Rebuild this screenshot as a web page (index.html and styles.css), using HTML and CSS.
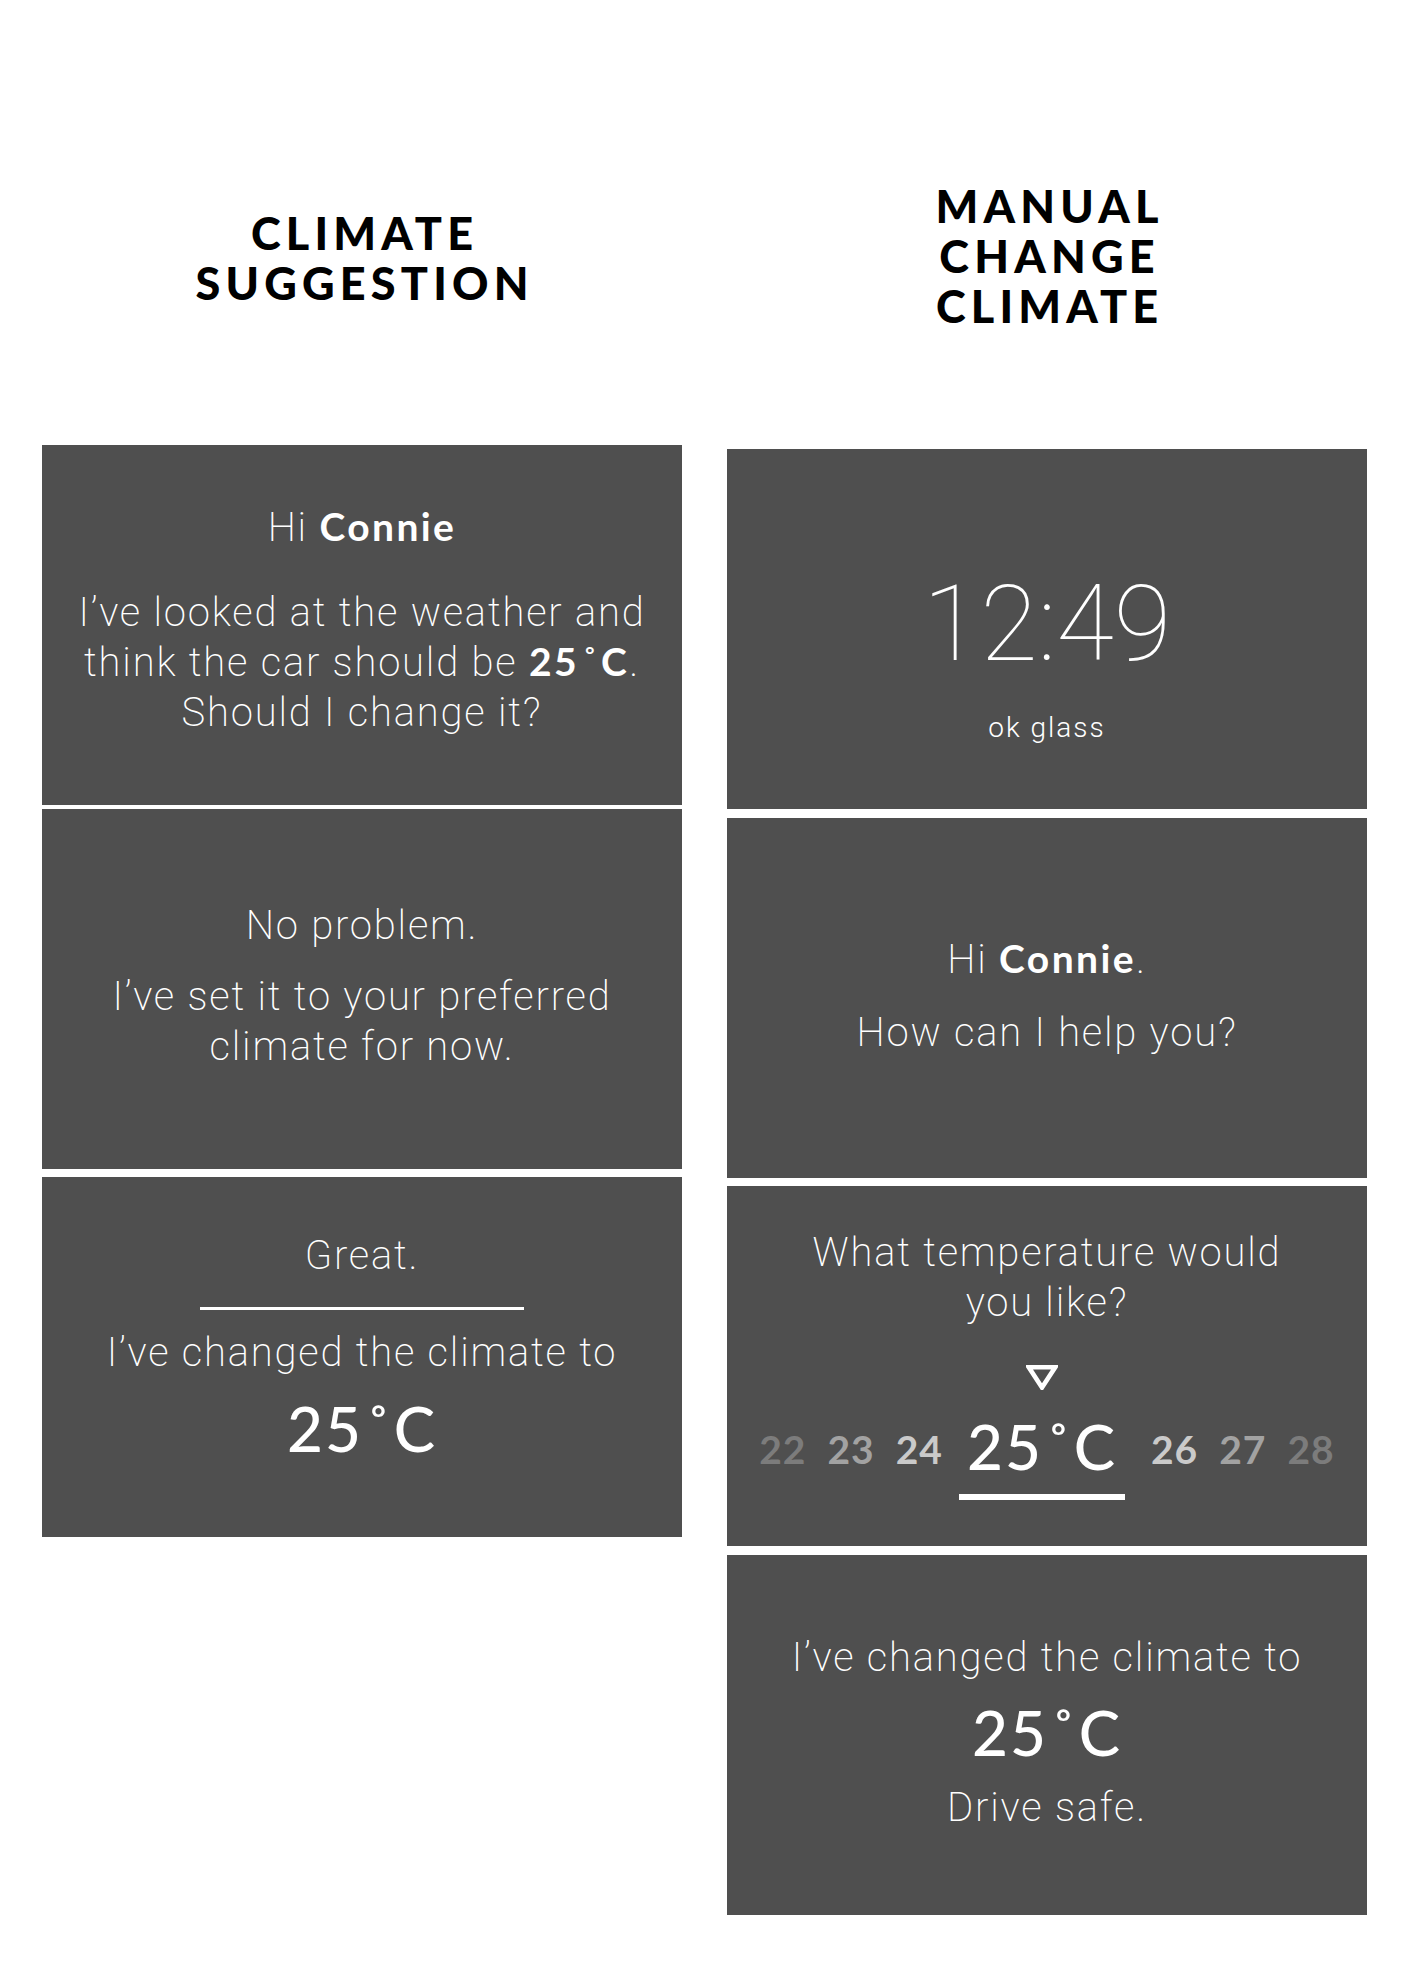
FILE: index.html
```html
<!DOCTYPE html>
<html lang="en">
<head>
<meta charset="utf-8">
<title>Climate flows</title>
<link rel="stylesheet" href="styles.css">
</head>
<body>
<main class="page">
  <section class="col">
    <header class="col-head">
      <h1 class="title">CLIMATE<br>SUGGESTION</h1>
    </header>
    <div class="card card--l1">
      <p class="line">Hi <span class="name">Connie</span></p>
      <p class="line gap-35">I’ve looked at the weather and<br>think the car should be <span class="name">25<span class="deg">˚</span>C</span>.<br>Should I change it?</p>
    </div>
    <div class="card card--l2 card--tight">
      <p class="line">No problem.</p>
      <p class="line gap-21">I’ve set it to your preferred<br>climate for now.</p>
    </div>
    <div class="card card--l3">
      <p class="line">Great.</p>
      <div class="rule"></div>
      <p class="line gap-18">I’ve changed the climate to</p>
      <p class="big-temp gap-19">25<span class="deg">˚</span>C</p>
    </div>
  </section>

  <section class="col">
    <header class="col-head col-head--right">
      <h1 class="title">MANUAL<br>CHANGE<br>CLIMATE</h1>
    </header>
    <div class="card card--r1">
      <p class="clock">12:49</p>
      <p class="sub">ok glass</p>
    </div>
    <div class="card card--r2 card--loose">
      <p class="line">Hi <span class="name">Connie</span>.</p>
      <p class="line gap-23">How can I help you?</p>
    </div>
    <div class="card card--r3">
      <p class="line">What temperature would<br>you like?</p>
      <svg class="pointer" width="32" height="25" viewBox="0 0 32 25" aria-hidden="true">
        <polygon points="2.8,2.3 29.2,2.3 16,22.5" fill="none" stroke="#fff" stroke-width="4.6" stroke-linejoin="miter"/>
      </svg>
      <div class="temps">
        <span class="t t--far">22</span>
        <span class="t t--mid">23</span>
        <span class="t t--near">24</span>
        <span class="t-current"><span class="t-current__value">25<span class="deg">˚</span>C</span></span>
        <span class="t t--near">26</span>
        <span class="t t--mid">27</span>
        <span class="t t--far">28</span>
      </div>
    </div>
    <div class="card card--r4 card--loose">
      <p class="line">I’ve changed the climate to</p>
      <p class="big-temp gap-18">25<span class="deg">˚</span>C</p>
      <p class="line gap-20">Drive safe.</p>
    </div>
  </section>
</main>
</body>
</html>
```

FILE: styles.css
```css
* { box-sizing: border-box; }

html, body {
  margin: 0;
  padding: 0;
  background: #ffffff;
}

body {
  width: 1410px;
  min-height: 1984px;
  font-family: Roboto, "Liberation Sans", sans-serif;
}

p, h1 { margin: 0; }

.page {
  display: flex;
  gap: 45px;
  padding: 70px 0 0 42px;
}

.col {
  width: 640px;
  display: flex;
  flex-direction: column;
}

.col-head {
  height: 375px;
  display: flex;
  align-items: center;
  justify-content: center;
}

.col-head--right {
  height: 379px;
  padding-bottom: 8px;
}

.title {
  font-family: Lato, "Liberation Sans", sans-serif;
  font-weight: 900;
  font-size: 45px;
  line-height: 50px;
  letter-spacing: 5.2px;
  padding-left: 5.2px;
  color: #000;
  text-align: center;
}

.card {
  height: 360px;
  background: #4f4f4f;
  color: #ffffff;
  display: flex;
  flex-direction: column;
  align-items: center;
  text-align: center;
  margin-top: 8px;
}

.card > * { flex-shrink: 0; }

.col-head + .card { margin-top: 0; }
.card--tight { margin-top: 4px; }
.card--loose { margin-top: 9px; }

.card--l1 { padding-top: 58px; }
.card--l2 { padding-top: 92px; }
.card--l3 { padding-top: 54px; }
.card--r1 { padding-top: 123px; }
.card--r2 { padding-top: 117px; }
.card--r3 { padding-top: 42px; }
.card--r4 { padding-top: 78px; }

.line {
  font-family: Roboto, "Liberation Sans", sans-serif;
  font-weight: 200;
  font-size: 40px;
  line-height: 50px;
  letter-spacing: 1.8px;
}

.name {
  font-family: Lato, "Liberation Sans", sans-serif;
  font-weight: 700;
  font-size: 39px;
  line-height: 1;
  letter-spacing: 2.4px;
}

.deg {
  display: inline-block;
  margin: 0 1px 0 3px;
  font-weight: 400;
}

.gap-18 { margin-top: 18px; }
.gap-19 { margin-top: 19px; }
.gap-20 { margin-top: 20px; }
.gap-21 { margin-top: 21px; }
.gap-23 { margin-top: 23px; }
.gap-35 { margin-top: 35px; }

.rule {
  width: 324px;
  height: 3px;
  background: #ffffff;
  margin-top: 26px;
}

.rule + .line { margin-top: 18px; }

.big-temp {
  font-family: Lato, "Liberation Sans", sans-serif;
  font-weight: 500;
  font-size: 62px;
  line-height: 62px;
  letter-spacing: 2px;
}

.clock {
  font-family: Roboto, "Liberation Sans", sans-serif;
  font-weight: 100;
  font-size: 105px;
  line-height: 105px;
}

.sub {
  font-family: Roboto, "Liberation Sans", sans-serif;
  font-weight: 300;
  font-size: 28px;
  line-height: 36px;
  letter-spacing: 2px;
  margin-top: 33px;
}

.pointer {
  display: block;
  margin-top: 37px;
  margin-left: -10px;
}

.temps {
  display: flex;
  align-items: flex-start;
  gap: 21px;
  margin-top: 25px;
}

.t {
  font-family: Lato, "Liberation Sans", sans-serif;
  font-weight: 700;
  font-size: 39px;
  line-height: 39px;
  letter-spacing: 1px;
  margin-top: 15px;
}

.t--far { color: #7c7c7c; }
.t--mid { color: #a2a2a2; }
.t--near { color: #cacaca; }

.t-current {
  width: 166px;
  margin: 0 5px 0 -5px;
  display: flex;
  flex-direction: column;
  align-items: center;
  font-family: Lato, "Liberation Sans", sans-serif;
  font-weight: 500;
  font-size: 62px;
  line-height: 62px;
  letter-spacing: 2px;
  color: #ffffff;
}

.t-current__value { display: block; }

.t-current::after {
  content: "";
  display: block;
  width: 166px;
  height: 6px;
  background: #ffffff;
  margin-top: 17px;
}
```
